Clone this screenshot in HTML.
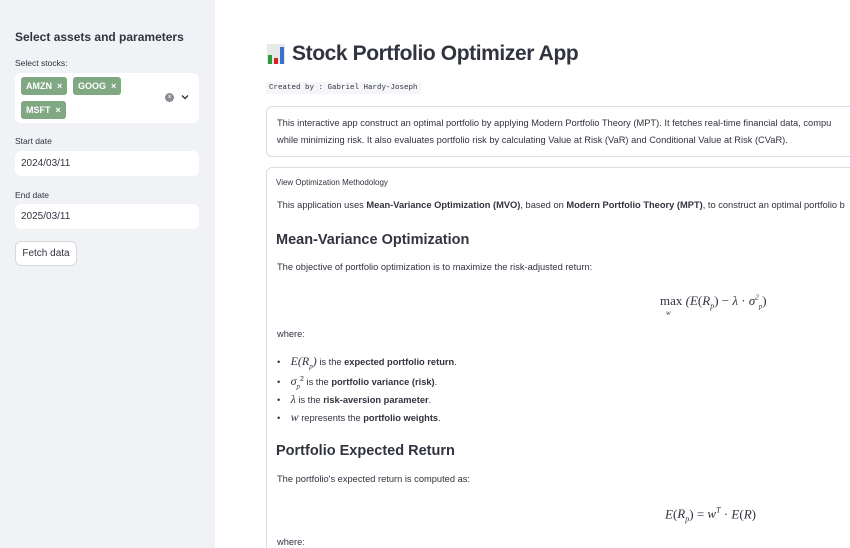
<!DOCTYPE html>
<html style="overflow:hidden;width:850px;height:548px"><head><meta charset="utf-8"><style>
*{box-sizing:border-box;margin:0;padding:0}
body{width:850px;height:548px;overflow:hidden;background:#fff;font-family:"Liberation Sans",sans-serif;color:#31333f;position:relative}
.a{position:absolute;white-space:nowrap}
#sb{position:absolute;left:0;top:0;width:215px;height:548px;background:#f0f2f6}
.inp{position:absolute;left:15px;width:184px;background:#fff;border-radius:6px;font-size:10px;padding-left:6px;display:flex;align-items:center}
.tag{position:absolute;background:#7fa883;color:#fff;font-size:9px;font-weight:bold;border-radius:3px;height:18px;line-height:18px;padding:0 5px}
.lbl{font-size:8.5px}
.box{position:absolute;left:266px;width:600px;border:1px solid #dcdde2;border-radius:6px}
.t{font-size:9.3px;color:#31333f}
.m{font-family:"Liberation Serif",serif;font-style:italic}
h2{font-size:14.5px;font-weight:bold}
</style></head><body>
<div id="sb">
<div class="a" style="left:15px;top:30px;font-size:12px;font-weight:bold">Select assets and parameters</div>
<div class="a lbl" style="left:15px;top:58px">Select stocks:</div>
<div class="inp" style="top:73px;height:50px"></div>
<div class="tag" style="left:21px;top:77px">AMZN&nbsp; ×</div>
<div class="tag" style="left:73px;top:77px">GOOG&nbsp; ×</div>
<div class="tag" style="left:21px;top:101px">MSFT&nbsp; ×</div>
<div class="a" style="left:165px;top:93px;width:9px;height:9px;border-radius:50%;background:#8a8c94;color:#fff;font-size:7px;line-height:9px;text-align:center">×</div>
<svg class="a" style="left:181px;top:94px" width="8" height="6"><path d="M1 1.5L4 4.5L7 1.5" stroke="#31333f" stroke-width="1.4" fill="none"/></svg>
<div class="a lbl" style="left:15px;top:136px">Start date</div>
<div class="inp" style="top:151px;height:25px">2024/03/11</div>
<div class="a lbl" style="left:15px;top:190px">End date</div>
<div class="inp" style="top:204px;height:25px">2025/03/11</div>
<div class="a" style="left:15px;top:241px;width:62px;height:25px;border:1px solid #d5d7dd;border-radius:6px;background:#fff;font-size:10px;line-height:23px;text-align:center">Fetch data</div>
</div>

<svg class="a" style="left:267px;top:44px" width="18" height="20"><rect x="0" y="0" width="18" height="20" fill="#e8e8e8"/><rect x="1" y="11" width="4" height="9" fill="#2e9c3e"/><rect x="7" y="14" width="4" height="6" fill="#d0281d"/><rect x="13" y="3" width="4" height="17" fill="#3b6fd0"/></svg>
<div class="a" style="left:292px;top:42px;font-size:21px;font-weight:bold;letter-spacing:-0.4px">Stock Portfolio Optimizer App</div>
<div class="a" style="left:266px;top:82px;background:#f5f6f8;font-family:'Liberation Mono',monospace;font-size:7.5px;padding:2px 3px">Created by : Gabriel Hardy-Joseph</div>

<div class="box" style="top:106px;height:51px"></div>
<div class="a t" style="left:277px;top:118px">This interactive app construct an optimal portfolio by applying Modern Portfolio Theory (MPT). It fetches real-time financial data, compu</div>
<div class="a t" style="left:277px;top:135px">while minimizing risk. It also evaluates portfolio risk by calculating Value at Risk (VaR) and Conditional Value at Risk (CVaR).</div>

<div class="box" style="top:167px;height:400px"></div>
<div class="a" style="left:276px;top:178px;font-size:8px">View Optimization Methodology</div>
<div class="a t" style="left:277px;top:200px">This application uses <b>Mean-Variance Optimization (MVO)</b>, based on <b>Modern Portfolio Theory (MPT)</b>, to construct an optimal portfolio b</div>
<h2 class="a" style="left:276px;top:232px">Mean-Variance Optimization</h2>
<div class="a t" style="left:277px;top:262px">The objective of portfolio optimization is to maximize the risk-adjusted return:</div>
<div class="a" style="left:660px;top:293px;font-family:'Liberation Serif',serif;font-size:13px">max <span class="m">(E</span>(<span class="m">R<sub style="font-size:8px">p</sub></span>) − <span class="m">λ</span> · <span class="m">σ<sup style="font-size:7px">2</sup><sub style="font-size:7px">p</sub></span>)</div>
<div class="a m" style="left:666px;top:309px;font-size:7px">w</div>
<div class="a t" style="left:277px;top:329px">where:</div>
<div class="a t" style="left:277px;top:354px">•&nbsp;&nbsp;&nbsp; <span class="m" style="font-size:12px">E(R<sub style="font-size:7px">p</sub>)</span> is the <b>expected portfolio return</b>.</div>
<div class="a t" style="left:277px;top:374px">•&nbsp;&nbsp;&nbsp; <span class="m" style="font-size:12px">σ<sub style="font-size:7px">p</sub></span><sup style="font-size:7px">2</sup> is the <b>portfolio variance (risk)</b>.</div>
<div class="a t" style="left:277px;top:392px">•&nbsp;&nbsp;&nbsp; <span class="m" style="font-size:12px">λ</span> is the <b>risk-aversion parameter</b>.</div>
<div class="a t" style="left:277px;top:410px">•&nbsp;&nbsp;&nbsp; <span class="m" style="font-size:12px">w</span> represents the <b>portfolio weights</b>.</div>
<h2 class="a" style="left:276px;top:443px">Portfolio Expected Return</h2>
<div class="a t" style="left:277px;top:474px">The portfolio's expected return is computed as:</div>
<div class="a" style="left:665px;top:506px;font-family:'Liberation Serif',serif;font-size:13px"><span class="m">E</span>(<span class="m">R<sub style="font-size:8px">p</sub></span>) = <span class="m">w<sup style="font-size:8px">T</sup></span> · <span class="m">E</span>(<span class="m">R</span>)</div>
<div class="a t" style="left:277px;top:537px">where:</div>
</body></html>
